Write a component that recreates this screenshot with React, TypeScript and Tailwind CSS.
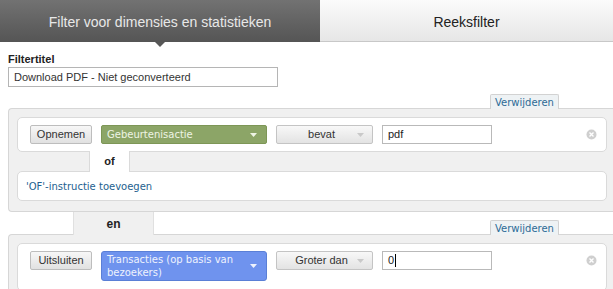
const CloseDot = () => (
  <svg width="11" height="11" viewBox="0 0 11 11" className="shrink-0">
    <circle cx="5.5" cy="5.5" r="5" fill="#cfcfcf" />
    <path d="M3.5 3.5 L7.5 7.5 M7.5 3.5 L3.5 7.5" stroke="#fff" strokeWidth="1.4" />
  </svg>
);

const Caret = ({ color }: { color: string }) => (
  <svg width="7" height="4" viewBox="0 0 7 4" className="shrink-0">
    <path d="M0 0 L7 0 L3.5 4 Z" fill={color} />
  </svg>
);

const GrayButton = ({ label }: { label: string }) => (
  <div className="flex h-[19px] w-[62px] items-center justify-center rounded-[2px] border border-[#bdbdbd] bg-gradient-to-b from-[#f7f7f7] to-[#e1e1e1] text-[11px] text-[#333]">
    {label}
  </div>
);

const OpSelect = ({ label }: { label: string }) => (
  <div className="flex h-[19px] w-[97px] items-center rounded-[2px] border border-[#c4c4c4] bg-gradient-to-b from-[#f8f8f8] to-[#e3e3e3] pl-[9px] pr-[8px] text-[11px] text-[#333]">
    <span className="flex-1 text-center">{label}</span>
    <Caret color="#c9c9c9" />
  </div>
);

const ValueInput = ({ value, cursor }: { value: string; cursor?: boolean }) => (
  <div className="flex h-[19px] w-[110px] items-center border border-[#b9b9b9] bg-white px-[5px] text-[11px] text-[#222]">
    {value}
    {cursor && <span className="ml-px h-[13px] w-px bg-black" />}
  </div>
);

const RemoveTab = () => (
  <div className="relative z-10 -mb-px flex h-[15px] w-[69px] items-center justify-center rounded-t-[2px] border border-b-0 border-[#d2d2d2] bg-[#eef2f4] font-['DejaVu_Sans',sans-serif] text-[10px] text-[#2c6a96]">
    Verwijderen
  </div>
);

export default function App() {
  return (
    <div className="h-[289px] w-[613px] overflow-hidden bg-white font-['Liberation_Sans',Arial,sans-serif]">
      {/* tabs */}
      <div className="flex h-[42px]">
        <div className="relative flex w-[320px] items-center justify-center bg-gradient-to-b from-[#727272] to-[#555] pt-[3px] text-[14px] text-[#e8e8e8]">
          Filter voor dimensies en statistieken
          <div className="absolute -bottom-[5px] left-[155px] h-0 w-0 border-x-[5px] border-t-[5px] border-x-transparent border-t-[#575757]" />
        </div>
        <div className="flex flex-1 items-center justify-center border-b border-[#c8c8c8] bg-gradient-to-b from-[#fbfbfb] to-[#e6e6e6] pt-[3px] text-[14px] text-[#222]">
          Reeksfilter
        </div>
      </div>

      <div className="pl-[8px]">
        <div className="mt-[11px] text-[11px] font-bold leading-[13px] text-[#222]">Filtertitel</div>
        <div className="mt-[1px] flex h-[20px] w-[270px] items-center border border-[#b5b5b5] px-[5px] text-[11px] text-[#333]">
          Download PDF - Niet geconverteerd
        </div>

        <div className="mt-[7px] flex pl-[482px]">
          <RemoveTab />
        </div>

        {/* group 1 */}
        <div className="w-[612px] rounded-l-[4px] border border-r-0 border-[#d6d6d6] bg-[#f0f0f0] pb-[10px] pl-[8px] pr-[8px] pt-[8px]">
          <div className="flex h-[35px] w-[590px] items-center rounded-[5px] border border-[#dadada] bg-white pl-[12px] pr-[9px]">
            <div className="flex items-center gap-[9px]">
              <GrayButton label="Opnemen" />
              <div className="flex h-[19px] w-[166px] items-center rounded-[2px] border border-[#7d9656] bg-[#8ca567] pl-[5px] pr-[9px] font-['DejaVu_Sans',sans-serif] text-[10px] text-[#eef4e4]">
                <span className="flex-1">Gebeurtenisactie</span>
                <Caret color="#eef4e4" />
              </div>
              <OpSelect label="bevat" />
              <ValueInput value="pdf" />
            </div>
            <div className="flex-1" />
            <CloseDot />
          </div>
          <div className="relative z-10 -my-px ml-[72px] flex h-[21px] w-[41px] items-center justify-center border-x border-[#dadada] bg-white text-[11px] font-bold text-[#222]">
            of
          </div>
          <div className="flex h-[30px] w-[590px] items-center rounded-[5px] border border-[#dadada] bg-white pl-[8px] font-['DejaVu_Sans',sans-serif] text-[10px] text-[#24618f]">
            'OF'-instructie toevoegen
          </div>
        </div>

        <div className="flex items-end">
          <div className="relative z-10 -mb-px ml-[65px] flex h-[23px] w-[81px] items-center justify-center border-x border-[#e0e0e0] bg-[#f0f0f0] text-[12px] font-bold text-[#222]">
            en
          </div>
          <div className="ml-[336px] mt-[5px]">
            <RemoveTab />
          </div>
        </div>

        {/* group 2 */}
        <div className="w-[612px] rounded-l-[4px] border border-r-0 border-[#d6d6d6] bg-[#f0f0f0] pb-[10px] pl-[8px] pr-[8px] pt-[8px]">
          <div className="flex h-[48px] w-[590px] items-start rounded-[5px] border border-[#dadada] bg-white pl-[12px] pr-[9px] pt-[7px]">
            <div className="flex items-start gap-[9px]">
              <GrayButton label="Uitsluiten" />
              <div className="flex h-[30px] w-[166px] items-center rounded-[3px] border border-[#5a7fd6] bg-[#6f93ee] pl-[5px] pr-[9px] font-['DejaVu_Sans',sans-serif] text-[10px] leading-[13px] text-[#eef2fd]">
                <span className="flex-1">Transacties (op basis van bezoekers)</span>
                <Caret color="#eef2fd" />
              </div>
              <OpSelect label="Groter dan" />
              <ValueInput value="0" cursor />
            </div>
            <div className="flex-1" />
            <div className="pt-[4px]">
              <CloseDot />
            </div>
          </div>
        </div>
      </div>
    </div>
  );
}
